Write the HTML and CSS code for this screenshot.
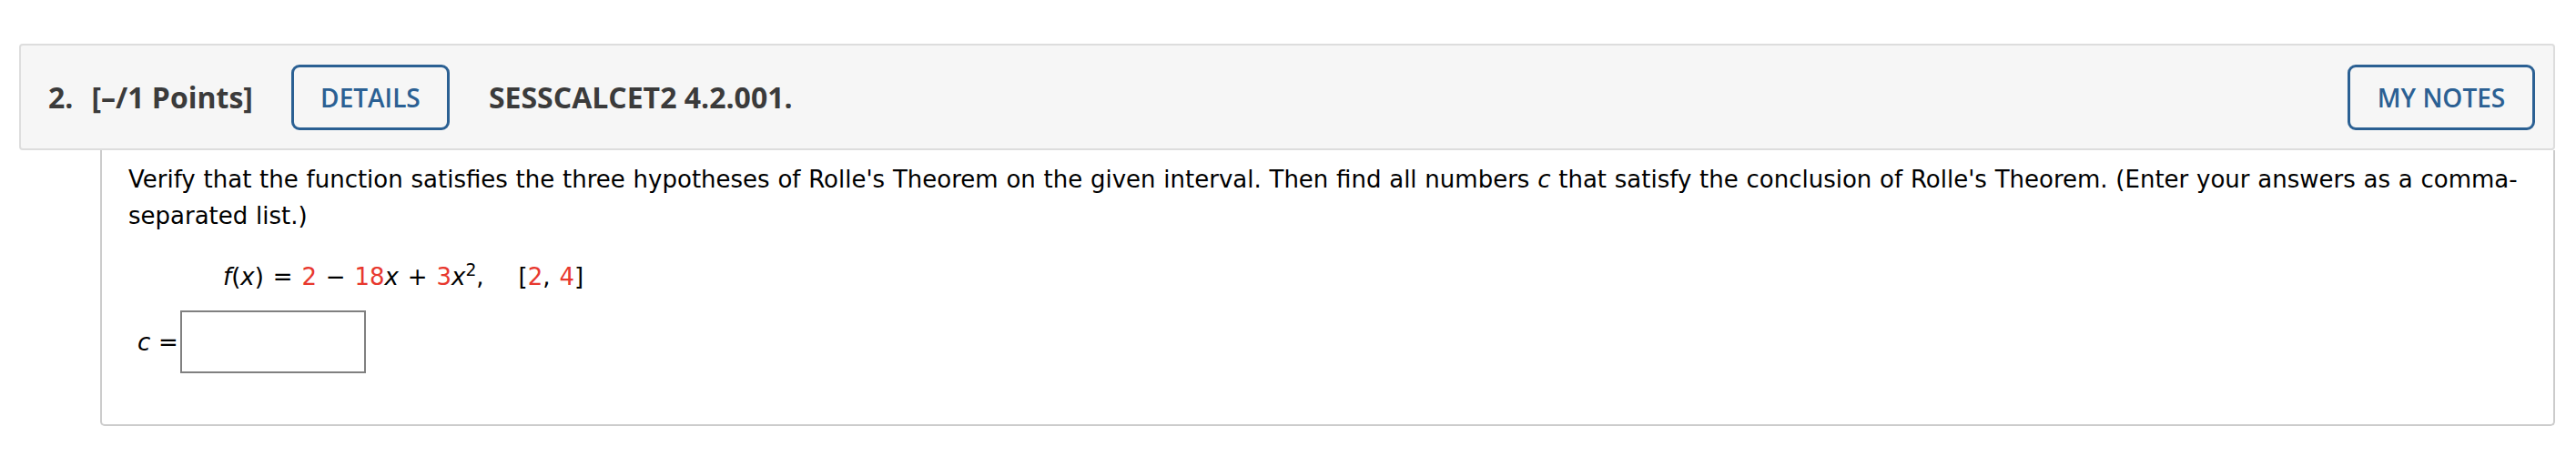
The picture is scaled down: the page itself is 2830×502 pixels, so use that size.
FILE: index.html
```html
<!DOCTYPE html>
<html lang="en">
<head>
<meta charset="utf-8">
<title>Question 2</title>
<link rel="stylesheet" href="styles.css">
</head>
<body>
<div class="question">
  <div class="q-header">
    <span class="q-num">2.</span>
    <span class="q-points">[–/1 Points]</span>
    <button class="btn btn-details" type="button">DETAILS</button>
    <span class="q-title">SESSCALCET2 4.2.001.</span>
    <button class="btn btn-notes" type="button">MY NOTES</button>
  </div>
  <div class="q-body">
    <p class="q-text">Verify that the function satisfies the three hypotheses of Rolle's Theorem on the given interval. Then find all numbers <i>c</i> that satisfy the conclusion of Rolle's Theorem. (Enter your answers as a comma-separated list.)</p>
    <p class="q-formula"><i>f</i>(<i>x</i>) = <span class="red">2</span> − <span class="red">18</span><i>x</i> + <span class="red">3</span><i>x</i><sup>2</sup>,<span class="interval">[<span class="red">2</span>, <span class="red">4</span>]</span></p>
    <div class="q-answer">
      <label class="ans-label" for="ans"><i>c</i> =</label>
      <input class="ans-input" id="ans" type="text">
    </div>
  </div>
</div>
</body>
</html>
```

FILE: styles.css
```css
html, body {
  margin: 0;
  padding: 0;
  background: #ffffff;
}

.question {
  margin: 48px 23px 0 21px;
}

.q-header {
  box-sizing: border-box;
  height: 117px;
  display: flex;
  align-items: center;
  padding: 0 20px 0 30px;
  background: #f6f6f6;
  border: 2px solid #dddddd;
  border-radius: 4px;
  font-family: "Open Sans", "Liberation Sans", sans-serif;
  font-weight: 700;
  font-size: 32px;
  color: #3b3b3b;
}

.q-num {
  margin-right: 20px;
}

.q-points {
  margin-right: 42px;
}

.btn {
  box-sizing: border-box;
  height: 72px;
  padding: 0;
  background: transparent;
  border: 3px solid #2b6093;
  border-radius: 9px;
  font-family: "Open Sans", "Liberation Sans", sans-serif;
  font-weight: 600;
  font-size: 28px;
  color: #2b6093;
  text-align: center;
}

.btn-details {
  width: 174px;
  margin-right: 43px;
}

.btn-notes {
  width: 206px;
  margin-left: auto;
}

.q-body {
  margin-left: 89px;
  padding: 12px 14px 56px 29px;
  border: 2px solid #cccccc;
  border-top: none;
  border-radius: 0 0 5px 5px;
  font-family: "DejaVu Sans", Verdana, sans-serif;
  font-size: 26px;
  line-height: 40px;
  word-spacing: 0.5px;
  color: #000000;
}

.q-text {
  margin: 0;
}

.q-formula {
  margin: 27px 0 0 104px;
  word-spacing: 1.6px;
}

.red {
  color: #e8382e;
}

.q-formula sup {
  font-size: 0.72em;
  line-height: 0;
  vertical-align: 0.55em;
}

.interval {
  margin-left: 38px;
}

.q-answer {
  display: flex;
  align-items: center;
  margin: 17px 0 0 10px;
}

.ans-label {
  margin-right: 2px;
}

.ans-input {
  box-sizing: border-box;
  width: 204px;
  height: 69px;
  margin: 0;
  border: 2px solid #808080;
  border-radius: 0;
  background: #ffffff;
  font-family: "DejaVu Sans", Verdana, sans-serif;
  font-size: 26px;
}
```
